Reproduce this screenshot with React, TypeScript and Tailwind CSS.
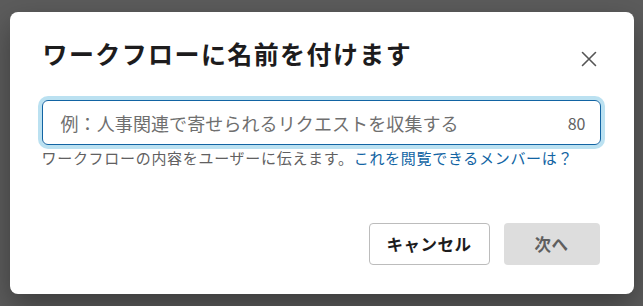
import React from "react";

export default function App() {
  return (
    <div
      className="flex h-[306px] w-[643px] items-center justify-center bg-[#5c5c5c]"
      style={{ fontFamily: '"Noto Sans CJK JP", "Noto Sans", sans-serif' }}
    >
      <div className="flex h-[282px] w-[624px] flex-col rounded-[8px] bg-white pb-[29px] pl-[32px] pr-[33px] pt-[23px] shadow-[0_12px_30px_rgba(0,0,0,0.35)]">
        <div className="flex items-start justify-between">
          <h1 className="pl-[1px] text-[25px] font-bold leading-[36px] tracking-[1.4px] text-[#1d1c1d]">
            ワークフローに名前を付けます
          </h1>
          <button className="mr-[4px] mt-[16px] flex h-[16px] w-[16px] items-center justify-center text-[#555555]">
            <svg width="16" height="16" viewBox="0 0 16 16" fill="none">
              <path d="M1.5 1.5L14.5 14.5M14.5 1.5L1.5 14.5" stroke="currentColor" strokeWidth="1.6" strokeLinecap="round" />
            </svg>
          </button>
        </div>
        <div className="mt-[29px] flex h-[45px] items-center rounded-[6px] border border-[#1264a3] pl-[18px] pr-[14px] shadow-[0_0_0_4px_rgba(29,155,209,0.3)]">
          <span className="flex-1 text-[18px] leading-[24px] tracking-[0.1px] text-[#6f6f6f]">
            例：人事関連で寄せられるリクエストを収集する
          </span>
          <span className="text-[16px] leading-[24px] text-[#616061]">80</span>
        </div>
        <p className="mt-[2px] text-[15px] leading-[22px] tracking-[0.7px] text-[#616061]">
          ワークフローの内容をユーザーに伝えます。
          <span className="text-[#1264a3]">これを閲覧できるメンバーは？</span>
        </p>
        <div className="mt-auto flex justify-end gap-[14px]">
          <button className="flex h-[42px] w-[121px] items-center justify-center rounded-[4px] border border-[#bcbcbc] bg-white text-[16.5px] font-bold tracking-[0.5px] text-[#1d1c1d]">
            キャンセル
          </button>
          <button className="mr-[1px] flex h-[42px] w-[96px] items-center justify-center rounded-[4px] bg-[#dddddd] text-[16.5px] font-bold tracking-[0.5px] text-[#5f5f5f]">
            次へ
          </button>
        </div>
      </div>
    </div>
  );
}
